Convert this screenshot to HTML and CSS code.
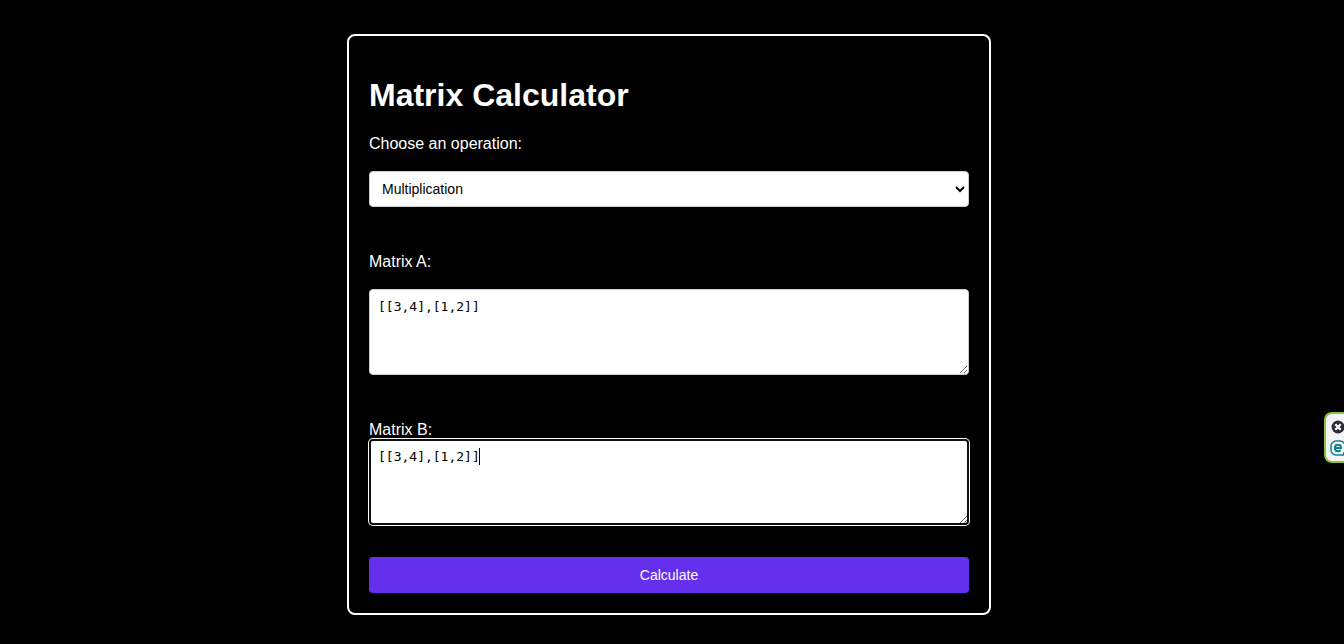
FILE: index.html
```html
<!DOCTYPE html>
<html lang="en">
<head>
<meta charset="utf-8">
<meta name="viewport" content="width=device-width, initial-scale=1">
<title>Matrix Calculator</title>
<link rel="stylesheet" href="styles.css">
</head>
<body>
<main class="page">
  <form class="calculator">
    <h1 class="title">Matrix Calculator</h1>
    <div class="field">
      <label for="operation">Choose an operation:</label>
      <select class="control select" id="operation">
        <option>Addition</option>
        <option>Subtraction</option>
        <option selected>Multiplication</option>
      </select>
    </div>
    <div class="field">
      <label for="matrix-a">Matrix A:</label>
      <textarea class="control matrix" id="matrix-a" spellcheck="false">[[3,4],[1,2]]</textarea>
    </div>
    <div class="field field-tight">
      <label for="matrix-b">Matrix B:</label>
      <div class="active-box">
        <textarea class="control matrix matrix-active" id="matrix-b" spellcheck="false">[[3,4],[1,2]]</textarea>
        <span class="caret" aria-hidden="true"></span>
      </div>
    </div>
    <button class="submit" type="button">Calculate</button>
  </form>
</main>
<aside class="widget">
  <button class="widget-button" type="button" aria-label="Close">
    <svg width="16" height="14" viewBox="-1 0 16 14"><circle cx="7" cy="7" r="6.5" fill="#2b2d3a"/><path d="M4.3 4.3l5.4 5.4M9.7 4.3l-5.4 5.4" stroke="#fff" stroke-width="2.2"/></svg>
  </button>
  <button class="widget-button" type="button" aria-label="Open assistant">
    <svg width="16" height="16" viewBox="0 0 16 16" fill="none" stroke="#0d8290"><path d="M15 15H6a5 5 0 0 1-5-5V6a5 5 0 0 1 5-5h4a5 5 0 0 1 5 5v4a5 5 0 0 1-2 4" stroke-width="1.5"/><path d="M5 8h6c0-2-1.200-3.200-3-3.200S4.900 6.100 4.900 8s1.300 3.200 3.200 3.200c1.100 0 1.900-.3 2.600-1" stroke-width="2"/></svg>
  </button>
</aside>
</body>
</html>
```
FILE: styles.css
```css
* {
  box-sizing: border-box;
}

body {
  margin: 0;
  background: #000;
  color: #fff;
  font: 16px/18px "Liberation Sans", Arial, sans-serif;
}

.page {
  padding: 34px 26px 28px 20px;
}

.calculator {
  max-width: 644px;
  margin: 0 auto;
  padding: 20px;
  border: 2px solid #fff;
  border-radius: 8px;
}

.title {
  margin: 21px 0;
  font-size: 32px;
  line-height: 37px;
}

.field {
  display: flex;
  flex-direction: column;
  gap: 18px;
  margin-bottom: 46px;
}

.field-tight {
  gap: 0;
  margin-bottom: 32px;
}

.control {
  display: block;
  width: 100%;
  margin: 0;
  border: 1px solid #ccc;
  border-radius: 4px;
  background: #fff;
  color: #000;
}

.select {
  height: 36px;
  padding: 8px;
  font: 14px "Liberation Sans", Arial, sans-serif;
}

.matrix {
  height: 86px;
  padding: 8px;
  font: 13px/17px "DejaVu Sans Mono", monospace;
  resize: vertical;
}

.active-box {
  position: relative;
}

.matrix-active,
.matrix:focus {
  outline: 2px solid #101010;
  outline-offset: -2px;
  box-shadow: 0 0 0 1px #fff;
}

.caret {
  position: absolute;
  top: 9px;
  left: 110px;
  width: 1px;
  height: 17px;
  background: #000;
}

.submit {
  display: block;
  width: 100%;
  height: 36px;
  border: 0;
  border-radius: 4px;
  background: #6430ee;
  color: #fff;
  font: 14px "Liberation Sans", Arial, sans-serif;
}

.widget {
  position: fixed;
  top: 412px;
  right: 0;
  display: flex;
  flex-direction: column;
  gap: 6px;
  width: 20px;
  height: 51px;
  padding: 6px 0 0 4px;
  overflow: hidden;
  border: 2px solid #8bc53f;
  border-right: 0;
  border-radius: 8px 0 0 8px;
  background: #f4f4f6;
}

.widget-button {
  display: flex;
  flex: none;
  padding: 0;
  border: 0;
  background: none;
}

.widget-button svg {
  flex: none;
}
```
